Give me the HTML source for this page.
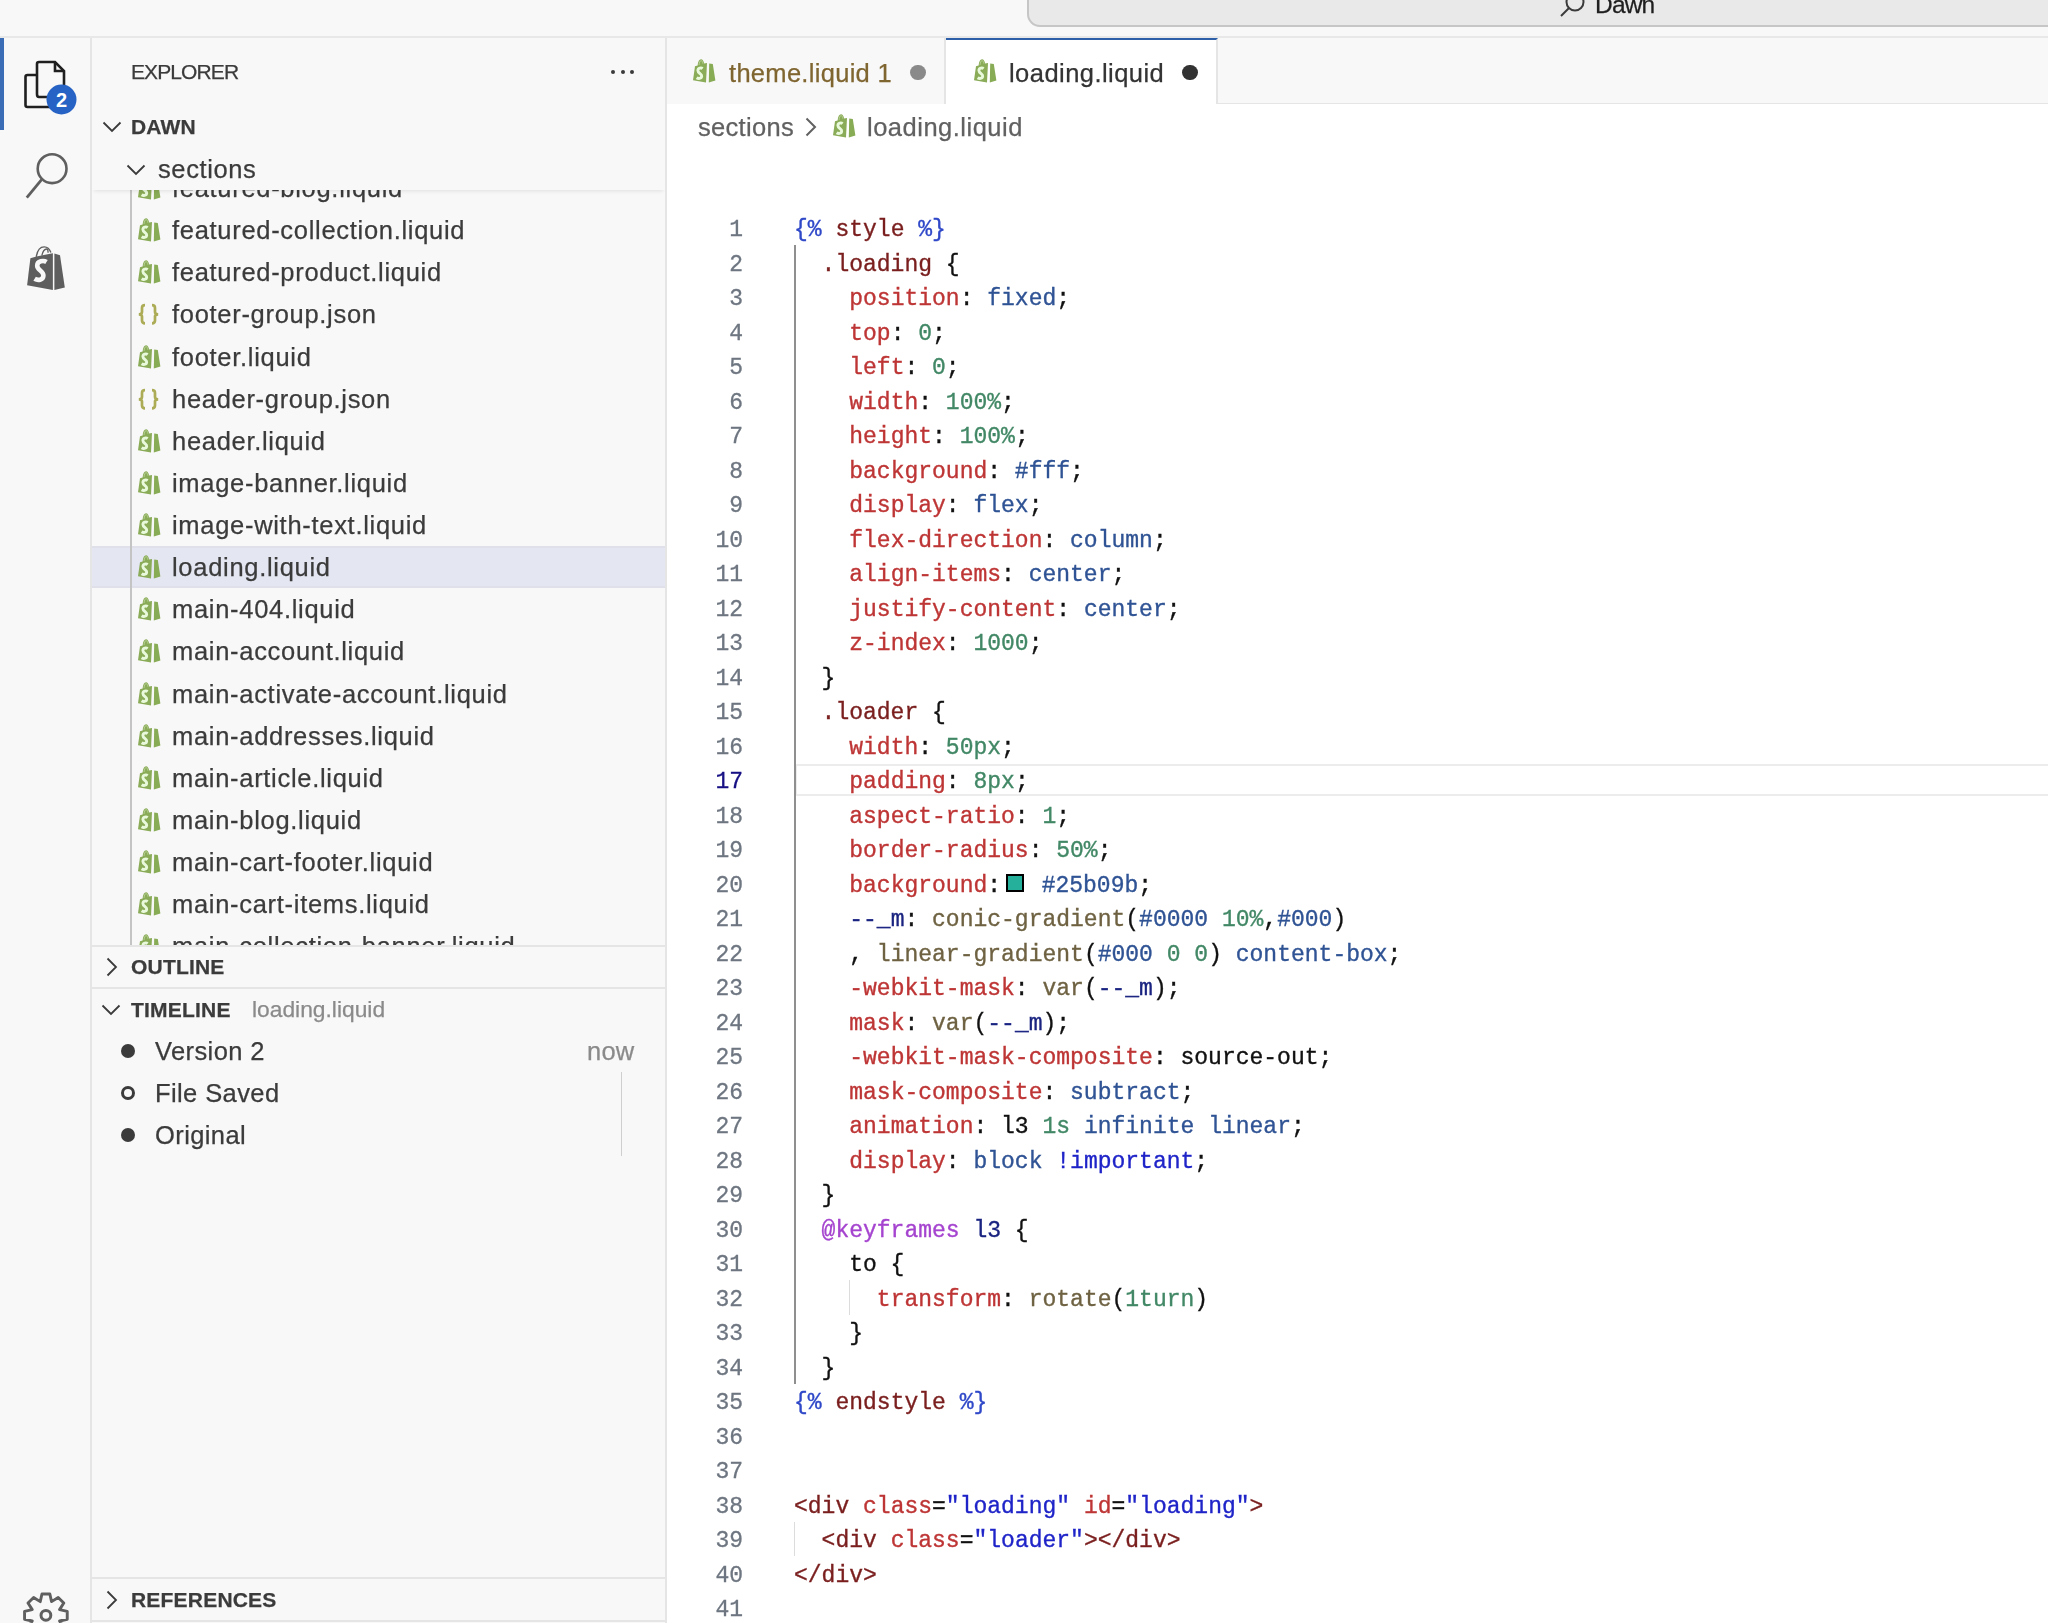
<!DOCTYPE html>
<html><head><meta charset="utf-8"><style>
*{margin:0;padding:0;box-sizing:border-box}
html,body{width:2048px;height:1623px;overflow:hidden;background:#fff;font-family:"Liberation Sans", sans-serif}
.ui,.fname,.cl,.ln{will-change:transform}
.abs{position:absolute}
.ic{position:absolute}
.jic{position:absolute;font-family:"Liberation Mono", monospace;font-size:21px;color:#a9aa5e;letter-spacing:-1px;line-height:24px}
#title{position:absolute;left:0;top:0;width:2048px;height:38px;background:#f8f8f8;border-bottom:2px solid #e8e8e8}
#cmd{position:absolute;left:1027px;top:-20px;width:1100px;height:47px;background:#e9e9e9;border:2px solid #c6c6c6;border-radius:13px}
#act{position:absolute;left:0;top:38px;width:92px;height:1585px;background:#f8f8f8;border-right:2px solid #e5e5e5}
#side{position:absolute;left:92px;top:38px;width:575px;height:1585px;background:#f8f8f8;border-right:2px solid #e5e5e5;overflow:hidden}
.ui{font-family:"Liberation Sans", sans-serif;color:#3b3b3b;white-space:nowrap;position:absolute;-webkit-text-stroke:0.25px currentColor}
.row{position:absolute;left:0;width:573px;height:42px}
.fname{-webkit-text-stroke:0.25px currentColor;position:absolute;left:80px;font-size:25.5px;letter-spacing:0.7px;line-height:42px;top:0;color:#3b3b3b}
.hdr{font-weight:bold;font-size:21px;letter-spacing:0.2px}
#tabs{position:absolute;left:667px;top:38px;width:1382px;height:67px;background:#f8f8f8;border-bottom:2px solid #e5e5e5}
.tab{position:absolute;top:0;height:67px}
#editor{position:absolute;left:667px;top:104px;width:1381px;height:1519px;background:#fff}
.ln{position:absolute;left:0;width:743px;text-align:right;font-family:"Liberation Mono", monospace;font-size:23px;color:#6e7681;height:34.5px;line-height:34.5px;-webkit-text-stroke:0.3px currentColor}
.cl{position:absolute;left:794.0px;font-family:"Liberation Mono", monospace;font-size:23px;white-space:pre;height:34.5px;line-height:34.5px;color:#000;-webkit-text-stroke:0.35px currentColor}
.ld{color:#2f48c8}
.tg{color:#7a1e1e}
.pr{color:#be3535}
.kw{color:#2f5394}
.nu{color:#428866}
.fn{color:#6e6242}
.va{color:#1a2480}
.at{color:#a544cf}
.im{color:#1f24c8}
.df{color:#111111}
</style></head>
<body>
<div id="title"><div id="cmd"></div>
<svg class="ic" style="left:1556px;top:-4px" width="30" height="24" viewBox="0 0 30 24"><circle cx="19" cy="6" r="8.5" fill="none" stroke="#3b3b3b" stroke-width="2"/><line x1="13" y1="12" x2="5" y2="20" stroke="#3b3b3b" stroke-width="2"/></svg>
<div class="ui" style="left:1595px;top:-12px;font-size:24.5px;line-height:34px;color:#1f1f1f;letter-spacing:-0.8px">Dawn</div>
</div>
<div id="act">
<div class="abs" style="left:0;top:0;width:4px;height:92px;background:#3a6db5"></div>
<svg class="ic" style="left:22px;top:21px" width="60" height="60" viewBox="0 0 60 60">
<path d="M16 16 H5.5 Q3.5 16 3.5 18 V46 Q3.5 48 5.5 48 H30" fill="none" stroke="#1f1f1f" stroke-width="2.6"/>
<path d="M17 3 H33 L42 12 V38 M17 3 Q15 3 15 5 V35 Q15 38 17 38 H26" fill="none" stroke="#1f1f1f" stroke-width="2.6"/>
<path d="M33 3 V12 H42" fill="none" stroke="#1f1f1f" stroke-width="2.6"/>
<circle cx="39.5" cy="40.5" r="15" fill="#2763c4"/>
<text x="39.5" y="48" text-anchor="middle" font-family="Liberation Sans" font-weight="bold" font-size="20" fill="#fff">2</text>
</svg>
<svg class="ic" style="left:0px;top:102px" width="90" height="70" viewBox="0 0 90 70">
<circle cx="52.1" cy="28.7" r="14.4" fill="none" stroke="#5f5f5f" stroke-width="2.6"/>
<line x1="41.6" y1="39.6" x2="26.8" y2="57.6" stroke="#5f5f5f" stroke-width="2.8"/>
</svg>
<svg class="ic" style="left:16px;top:198px" width="60" height="60" viewBox="0 0 60 60">
<path d="M14.4 22.2 L20.5 20.4 L36.9 17.2 L36.9 54 L11.1 49.2 Z" fill="#5e5e5e"/>
<path d="M38.4 17.4 L44 19.2 L48.8 51.4 L38.4 54 Z" fill="#5e5e5e"/>
<path d="M20.3 20.8 C21.3 14.5 24.3 10.9 28.2 10.9 C31.2 10.9 33.6 13 34.9 16.6" fill="none" stroke="#5e5e5e" stroke-width="1.4"/>
<path d="M25.8 19.6 C26.8 15.4 28.6 13 30.6 13 C31.6 13 32.1 14.2 32.1 16.8" fill="none" stroke="#5e5e5e" stroke-width="1.3"/>
<path d="M30.5 26 C27.8 24.3 21.2 24.6 21.2 29.8 C21.2 34.4 27.6 34.8 27.4 39.6 C27.2 44.2 21.8 44.8 18.6 42.8" fill="none" stroke="#f8f8f8" stroke-width="4.6" stroke-linecap="butt"/>
</svg>
<svg class="ic" style="left:0px;top:-38px" width="92" height="1623" viewBox="0 0 92 1623">
<path d="M41.95 1593.96 L49.85 1593.96 L51.56 1601.63 L58.19 1597.42 L63.78 1603.01 L59.57 1609.64 L67.24 1611.35 L67.24 1619.25 L59.57 1620.96 L63.78 1627.59 L58.19 1633.18 L51.56 1628.97 L49.85 1636.64 L41.95 1636.64 L40.24 1628.97 L33.61 1633.18 L28.02 1627.59 L32.23 1620.96 L24.56 1619.25 L24.56 1611.35 L32.23 1609.64 L28.02 1603.01 L33.61 1597.42 L40.24 1601.63 Z" fill="none" stroke="#5f5f5f" stroke-width="2.9" stroke-linejoin="round"/>
<circle cx="45.9" cy="1615.3" r="4.9" fill="none" stroke="#5f5f5f" stroke-width="3"/>
</svg>
</div>
<div id="side">
<div class="ui" style="left:39px;top:19px;font-size:21px;line-height:30px;letter-spacing:-0.9px">EXPLORER</div>
<div class="abs" style="left:519.0px;top:32px;width:4px;height:4px;border-radius:2px;background:#3b3b3b"></div>
<div class="abs" style="left:528.6px;top:32px;width:4px;height:4px;border-radius:2px;background:#3b3b3b"></div>
<div class="abs" style="left:538.2px;top:32px;width:4px;height:4px;border-radius:2px;background:#3b3b3b"></div>
<div class="abs" style="left:0;top:152px;width:573px;height:756px;overflow:hidden">
<div class="row" style="top:-23.00px;">
<svg class="ic" style="left:40.00px;top:4.00px" width="34" height="34" viewBox="0 0 34 34">
<path d="M8 12.2 L10.6 11.4 C11 7.5 12.3 5.3 14 5.3 C15.6 5.3 16.6 7.2 17.2 9.6 L20 9 L19 28.6 L6 26.3 Z" fill="#8aab57"/>
<path d="M22.2 9.5 L25.8 10 L28.4 26.6 L21.8 28.6 Z" fill="#88ab55"/>
<path d="M12 11 C12.3 8.2 13.1 6.6 14.1 6.6 C15 6.6 15.6 7.8 15.9 9.7" fill="none" stroke="#b9d29a" stroke-width="0.9"/>
<path d="M15.6 14.6 C14.4 13.6 10.9 13.6 10.9 16.6 C10.9 19.6 14.9 19.4 14.7 22.2 C14.5 24.9 11.2 24.8 9.6 23.7" fill="none" stroke="#e9f9dc" stroke-width="2.9" stroke-linecap="butt"/>
</svg>
<div class="fname">featured-blog.liquid</div>
</div>
<div class="row" style="top:19.12px;">
<svg class="ic" style="left:40.00px;top:4.00px" width="34" height="34" viewBox="0 0 34 34">
<path d="M8 12.2 L10.6 11.4 C11 7.5 12.3 5.3 14 5.3 C15.6 5.3 16.6 7.2 17.2 9.6 L20 9 L19 28.6 L6 26.3 Z" fill="#8aab57"/>
<path d="M22.2 9.5 L25.8 10 L28.4 26.6 L21.8 28.6 Z" fill="#88ab55"/>
<path d="M12 11 C12.3 8.2 13.1 6.6 14.1 6.6 C15 6.6 15.6 7.8 15.9 9.7" fill="none" stroke="#b9d29a" stroke-width="0.9"/>
<path d="M15.6 14.6 C14.4 13.6 10.9 13.6 10.9 16.6 C10.9 19.6 14.9 19.4 14.7 22.2 C14.5 24.9 11.2 24.8 9.6 23.7" fill="none" stroke="#e9f9dc" stroke-width="2.9" stroke-linecap="butt"/>
</svg>
<div class="fname">featured-collection.liquid</div>
</div>
<div class="row" style="top:61.25px;">
<svg class="ic" style="left:40.00px;top:4.00px" width="34" height="34" viewBox="0 0 34 34">
<path d="M8 12.2 L10.6 11.4 C11 7.5 12.3 5.3 14 5.3 C15.6 5.3 16.6 7.2 17.2 9.6 L20 9 L19 28.6 L6 26.3 Z" fill="#8aab57"/>
<path d="M22.2 9.5 L25.8 10 L28.4 26.6 L21.8 28.6 Z" fill="#88ab55"/>
<path d="M12 11 C12.3 8.2 13.1 6.6 14.1 6.6 C15 6.6 15.6 7.8 15.9 9.7" fill="none" stroke="#b9d29a" stroke-width="0.9"/>
<path d="M15.6 14.6 C14.4 13.6 10.9 13.6 10.9 16.6 C10.9 19.6 14.9 19.4 14.7 22.2 C14.5 24.9 11.2 24.8 9.6 23.7" fill="none" stroke="#e9f9dc" stroke-width="2.9" stroke-linecap="butt"/>
</svg>
<div class="fname">featured-product.liquid</div>
</div>
<div class="row" style="top:103.38px;">
<svg class="ic" style="left:45px;top:9px" width="24" height="24" viewBox="0 0 24 24">
<path d="M8 3.2 C5.6 3.2 5 4.2 5 6 V10 C5 11.4 4 12.3 1.8 12.3 C4 12.3 5 13.2 5 14.6 V18.6 C5 20.4 5.6 21.4 8 21.4" fill="none" stroke="#acac56" stroke-width="2.7"/>
<path d="M15 3.2 C17.4 3.2 18 4.2 18 6 V10 C18 11.4 19 12.3 21.2 12.3 C19 12.3 18 13.2 18 14.6 V18.6 C18 20.4 17.4 21.4 15 21.4" fill="none" stroke="#acac56" stroke-width="2.7"/>
</svg>
<div class="fname">footer-group.json</div>
</div>
<div class="row" style="top:145.50px;">
<svg class="ic" style="left:40.00px;top:4.00px" width="34" height="34" viewBox="0 0 34 34">
<path d="M8 12.2 L10.6 11.4 C11 7.5 12.3 5.3 14 5.3 C15.6 5.3 16.6 7.2 17.2 9.6 L20 9 L19 28.6 L6 26.3 Z" fill="#8aab57"/>
<path d="M22.2 9.5 L25.8 10 L28.4 26.6 L21.8 28.6 Z" fill="#88ab55"/>
<path d="M12 11 C12.3 8.2 13.1 6.6 14.1 6.6 C15 6.6 15.6 7.8 15.9 9.7" fill="none" stroke="#b9d29a" stroke-width="0.9"/>
<path d="M15.6 14.6 C14.4 13.6 10.9 13.6 10.9 16.6 C10.9 19.6 14.9 19.4 14.7 22.2 C14.5 24.9 11.2 24.8 9.6 23.7" fill="none" stroke="#e9f9dc" stroke-width="2.9" stroke-linecap="butt"/>
</svg>
<div class="fname">footer.liquid</div>
</div>
<div class="row" style="top:187.62px;">
<svg class="ic" style="left:45px;top:9px" width="24" height="24" viewBox="0 0 24 24">
<path d="M8 3.2 C5.6 3.2 5 4.2 5 6 V10 C5 11.4 4 12.3 1.8 12.3 C4 12.3 5 13.2 5 14.6 V18.6 C5 20.4 5.6 21.4 8 21.4" fill="none" stroke="#acac56" stroke-width="2.7"/>
<path d="M15 3.2 C17.4 3.2 18 4.2 18 6 V10 C18 11.4 19 12.3 21.2 12.3 C19 12.3 18 13.2 18 14.6 V18.6 C18 20.4 17.4 21.4 15 21.4" fill="none" stroke="#acac56" stroke-width="2.7"/>
</svg>
<div class="fname">header-group.json</div>
</div>
<div class="row" style="top:229.75px;">
<svg class="ic" style="left:40.00px;top:4.00px" width="34" height="34" viewBox="0 0 34 34">
<path d="M8 12.2 L10.6 11.4 C11 7.5 12.3 5.3 14 5.3 C15.6 5.3 16.6 7.2 17.2 9.6 L20 9 L19 28.6 L6 26.3 Z" fill="#8aab57"/>
<path d="M22.2 9.5 L25.8 10 L28.4 26.6 L21.8 28.6 Z" fill="#88ab55"/>
<path d="M12 11 C12.3 8.2 13.1 6.6 14.1 6.6 C15 6.6 15.6 7.8 15.9 9.7" fill="none" stroke="#b9d29a" stroke-width="0.9"/>
<path d="M15.6 14.6 C14.4 13.6 10.9 13.6 10.9 16.6 C10.9 19.6 14.9 19.4 14.7 22.2 C14.5 24.9 11.2 24.8 9.6 23.7" fill="none" stroke="#e9f9dc" stroke-width="2.9" stroke-linecap="butt"/>
</svg>
<div class="fname">header.liquid</div>
</div>
<div class="row" style="top:271.88px;">
<svg class="ic" style="left:40.00px;top:4.00px" width="34" height="34" viewBox="0 0 34 34">
<path d="M8 12.2 L10.6 11.4 C11 7.5 12.3 5.3 14 5.3 C15.6 5.3 16.6 7.2 17.2 9.6 L20 9 L19 28.6 L6 26.3 Z" fill="#8aab57"/>
<path d="M22.2 9.5 L25.8 10 L28.4 26.6 L21.8 28.6 Z" fill="#88ab55"/>
<path d="M12 11 C12.3 8.2 13.1 6.6 14.1 6.6 C15 6.6 15.6 7.8 15.9 9.7" fill="none" stroke="#b9d29a" stroke-width="0.9"/>
<path d="M15.6 14.6 C14.4 13.6 10.9 13.6 10.9 16.6 C10.9 19.6 14.9 19.4 14.7 22.2 C14.5 24.9 11.2 24.8 9.6 23.7" fill="none" stroke="#e9f9dc" stroke-width="2.9" stroke-linecap="butt"/>
</svg>
<div class="fname">image-banner.liquid</div>
</div>
<div class="row" style="top:314.00px;">
<svg class="ic" style="left:40.00px;top:4.00px" width="34" height="34" viewBox="0 0 34 34">
<path d="M8 12.2 L10.6 11.4 C11 7.5 12.3 5.3 14 5.3 C15.6 5.3 16.6 7.2 17.2 9.6 L20 9 L19 28.6 L6 26.3 Z" fill="#8aab57"/>
<path d="M22.2 9.5 L25.8 10 L28.4 26.6 L21.8 28.6 Z" fill="#88ab55"/>
<path d="M12 11 C12.3 8.2 13.1 6.6 14.1 6.6 C15 6.6 15.6 7.8 15.9 9.7" fill="none" stroke="#b9d29a" stroke-width="0.9"/>
<path d="M15.6 14.6 C14.4 13.6 10.9 13.6 10.9 16.6 C10.9 19.6 14.9 19.4 14.7 22.2 C14.5 24.9 11.2 24.8 9.6 23.7" fill="none" stroke="#e9f9dc" stroke-width="2.9" stroke-linecap="butt"/>
</svg>
<div class="fname">image-with-text.liquid</div>
</div>
<div class="row" style="top:356.12px;background:#e4e6f1;box-shadow:inset 0 2px 0 #dfe0ea, inset 0 -2px 0 #dfe0ea;">
<svg class="ic" style="left:40.00px;top:4.00px" width="34" height="34" viewBox="0 0 34 34">
<path d="M8 12.2 L10.6 11.4 C11 7.5 12.3 5.3 14 5.3 C15.6 5.3 16.6 7.2 17.2 9.6 L20 9 L19 28.6 L6 26.3 Z" fill="#8aab57"/>
<path d="M22.2 9.5 L25.8 10 L28.4 26.6 L21.8 28.6 Z" fill="#88ab55"/>
<path d="M12 11 C12.3 8.2 13.1 6.6 14.1 6.6 C15 6.6 15.6 7.8 15.9 9.7" fill="none" stroke="#b9d29a" stroke-width="0.9"/>
<path d="M15.6 14.6 C14.4 13.6 10.9 13.6 10.9 16.6 C10.9 19.6 14.9 19.4 14.7 22.2 C14.5 24.9 11.2 24.8 9.6 23.7" fill="none" stroke="#e9f9dc" stroke-width="2.9" stroke-linecap="butt"/>
</svg>
<div class="fname">loading.liquid</div>
</div>
<div class="row" style="top:398.25px;">
<svg class="ic" style="left:40.00px;top:4.00px" width="34" height="34" viewBox="0 0 34 34">
<path d="M8 12.2 L10.6 11.4 C11 7.5 12.3 5.3 14 5.3 C15.6 5.3 16.6 7.2 17.2 9.6 L20 9 L19 28.6 L6 26.3 Z" fill="#8aab57"/>
<path d="M22.2 9.5 L25.8 10 L28.4 26.6 L21.8 28.6 Z" fill="#88ab55"/>
<path d="M12 11 C12.3 8.2 13.1 6.6 14.1 6.6 C15 6.6 15.6 7.8 15.9 9.7" fill="none" stroke="#b9d29a" stroke-width="0.9"/>
<path d="M15.6 14.6 C14.4 13.6 10.9 13.6 10.9 16.6 C10.9 19.6 14.9 19.4 14.7 22.2 C14.5 24.9 11.2 24.8 9.6 23.7" fill="none" stroke="#e9f9dc" stroke-width="2.9" stroke-linecap="butt"/>
</svg>
<div class="fname">main-404.liquid</div>
</div>
<div class="row" style="top:440.38px;">
<svg class="ic" style="left:40.00px;top:4.00px" width="34" height="34" viewBox="0 0 34 34">
<path d="M8 12.2 L10.6 11.4 C11 7.5 12.3 5.3 14 5.3 C15.6 5.3 16.6 7.2 17.2 9.6 L20 9 L19 28.6 L6 26.3 Z" fill="#8aab57"/>
<path d="M22.2 9.5 L25.8 10 L28.4 26.6 L21.8 28.6 Z" fill="#88ab55"/>
<path d="M12 11 C12.3 8.2 13.1 6.6 14.1 6.6 C15 6.6 15.6 7.8 15.9 9.7" fill="none" stroke="#b9d29a" stroke-width="0.9"/>
<path d="M15.6 14.6 C14.4 13.6 10.9 13.6 10.9 16.6 C10.9 19.6 14.9 19.4 14.7 22.2 C14.5 24.9 11.2 24.8 9.6 23.7" fill="none" stroke="#e9f9dc" stroke-width="2.9" stroke-linecap="butt"/>
</svg>
<div class="fname">main-account.liquid</div>
</div>
<div class="row" style="top:482.50px;">
<svg class="ic" style="left:40.00px;top:4.00px" width="34" height="34" viewBox="0 0 34 34">
<path d="M8 12.2 L10.6 11.4 C11 7.5 12.3 5.3 14 5.3 C15.6 5.3 16.6 7.2 17.2 9.6 L20 9 L19 28.6 L6 26.3 Z" fill="#8aab57"/>
<path d="M22.2 9.5 L25.8 10 L28.4 26.6 L21.8 28.6 Z" fill="#88ab55"/>
<path d="M12 11 C12.3 8.2 13.1 6.6 14.1 6.6 C15 6.6 15.6 7.8 15.9 9.7" fill="none" stroke="#b9d29a" stroke-width="0.9"/>
<path d="M15.6 14.6 C14.4 13.6 10.9 13.6 10.9 16.6 C10.9 19.6 14.9 19.4 14.7 22.2 C14.5 24.9 11.2 24.8 9.6 23.7" fill="none" stroke="#e9f9dc" stroke-width="2.9" stroke-linecap="butt"/>
</svg>
<div class="fname">main-activate-account.liquid</div>
</div>
<div class="row" style="top:524.62px;">
<svg class="ic" style="left:40.00px;top:4.00px" width="34" height="34" viewBox="0 0 34 34">
<path d="M8 12.2 L10.6 11.4 C11 7.5 12.3 5.3 14 5.3 C15.6 5.3 16.6 7.2 17.2 9.6 L20 9 L19 28.6 L6 26.3 Z" fill="#8aab57"/>
<path d="M22.2 9.5 L25.8 10 L28.4 26.6 L21.8 28.6 Z" fill="#88ab55"/>
<path d="M12 11 C12.3 8.2 13.1 6.6 14.1 6.6 C15 6.6 15.6 7.8 15.9 9.7" fill="none" stroke="#b9d29a" stroke-width="0.9"/>
<path d="M15.6 14.6 C14.4 13.6 10.9 13.6 10.9 16.6 C10.9 19.6 14.9 19.4 14.7 22.2 C14.5 24.9 11.2 24.8 9.6 23.7" fill="none" stroke="#e9f9dc" stroke-width="2.9" stroke-linecap="butt"/>
</svg>
<div class="fname">main-addresses.liquid</div>
</div>
<div class="row" style="top:566.75px;">
<svg class="ic" style="left:40.00px;top:4.00px" width="34" height="34" viewBox="0 0 34 34">
<path d="M8 12.2 L10.6 11.4 C11 7.5 12.3 5.3 14 5.3 C15.6 5.3 16.6 7.2 17.2 9.6 L20 9 L19 28.6 L6 26.3 Z" fill="#8aab57"/>
<path d="M22.2 9.5 L25.8 10 L28.4 26.6 L21.8 28.6 Z" fill="#88ab55"/>
<path d="M12 11 C12.3 8.2 13.1 6.6 14.1 6.6 C15 6.6 15.6 7.8 15.9 9.7" fill="none" stroke="#b9d29a" stroke-width="0.9"/>
<path d="M15.6 14.6 C14.4 13.6 10.9 13.6 10.9 16.6 C10.9 19.6 14.9 19.4 14.7 22.2 C14.5 24.9 11.2 24.8 9.6 23.7" fill="none" stroke="#e9f9dc" stroke-width="2.9" stroke-linecap="butt"/>
</svg>
<div class="fname">main-article.liquid</div>
</div>
<div class="row" style="top:608.88px;">
<svg class="ic" style="left:40.00px;top:4.00px" width="34" height="34" viewBox="0 0 34 34">
<path d="M8 12.2 L10.6 11.4 C11 7.5 12.3 5.3 14 5.3 C15.6 5.3 16.6 7.2 17.2 9.6 L20 9 L19 28.6 L6 26.3 Z" fill="#8aab57"/>
<path d="M22.2 9.5 L25.8 10 L28.4 26.6 L21.8 28.6 Z" fill="#88ab55"/>
<path d="M12 11 C12.3 8.2 13.1 6.6 14.1 6.6 C15 6.6 15.6 7.8 15.9 9.7" fill="none" stroke="#b9d29a" stroke-width="0.9"/>
<path d="M15.6 14.6 C14.4 13.6 10.9 13.6 10.9 16.6 C10.9 19.6 14.9 19.4 14.7 22.2 C14.5 24.9 11.2 24.8 9.6 23.7" fill="none" stroke="#e9f9dc" stroke-width="2.9" stroke-linecap="butt"/>
</svg>
<div class="fname">main-blog.liquid</div>
</div>
<div class="row" style="top:651.00px;">
<svg class="ic" style="left:40.00px;top:4.00px" width="34" height="34" viewBox="0 0 34 34">
<path d="M8 12.2 L10.6 11.4 C11 7.5 12.3 5.3 14 5.3 C15.6 5.3 16.6 7.2 17.2 9.6 L20 9 L19 28.6 L6 26.3 Z" fill="#8aab57"/>
<path d="M22.2 9.5 L25.8 10 L28.4 26.6 L21.8 28.6 Z" fill="#88ab55"/>
<path d="M12 11 C12.3 8.2 13.1 6.6 14.1 6.6 C15 6.6 15.6 7.8 15.9 9.7" fill="none" stroke="#b9d29a" stroke-width="0.9"/>
<path d="M15.6 14.6 C14.4 13.6 10.9 13.6 10.9 16.6 C10.9 19.6 14.9 19.4 14.7 22.2 C14.5 24.9 11.2 24.8 9.6 23.7" fill="none" stroke="#e9f9dc" stroke-width="2.9" stroke-linecap="butt"/>
</svg>
<div class="fname">main-cart-footer.liquid</div>
</div>
<div class="row" style="top:693.12px;">
<svg class="ic" style="left:40.00px;top:4.00px" width="34" height="34" viewBox="0 0 34 34">
<path d="M8 12.2 L10.6 11.4 C11 7.5 12.3 5.3 14 5.3 C15.6 5.3 16.6 7.2 17.2 9.6 L20 9 L19 28.6 L6 26.3 Z" fill="#8aab57"/>
<path d="M22.2 9.5 L25.8 10 L28.4 26.6 L21.8 28.6 Z" fill="#88ab55"/>
<path d="M12 11 C12.3 8.2 13.1 6.6 14.1 6.6 C15 6.6 15.6 7.8 15.9 9.7" fill="none" stroke="#b9d29a" stroke-width="0.9"/>
<path d="M15.6 14.6 C14.4 13.6 10.9 13.6 10.9 16.6 C10.9 19.6 14.9 19.4 14.7 22.2 C14.5 24.9 11.2 24.8 9.6 23.7" fill="none" stroke="#e9f9dc" stroke-width="2.9" stroke-linecap="butt"/>
</svg>
<div class="fname">main-cart-items.liquid</div>
</div>
<div class="row" style="top:735.25px;">
<svg class="ic" style="left:40.00px;top:4.00px" width="34" height="34" viewBox="0 0 34 34">
<path d="M8 12.2 L10.6 11.4 C11 7.5 12.3 5.3 14 5.3 C15.6 5.3 16.6 7.2 17.2 9.6 L20 9 L19 28.6 L6 26.3 Z" fill="#8aab57"/>
<path d="M22.2 9.5 L25.8 10 L28.4 26.6 L21.8 28.6 Z" fill="#88ab55"/>
<path d="M12 11 C12.3 8.2 13.1 6.6 14.1 6.6 C15 6.6 15.6 7.8 15.9 9.7" fill="none" stroke="#b9d29a" stroke-width="0.9"/>
<path d="M15.6 14.6 C14.4 13.6 10.9 13.6 10.9 16.6 C10.9 19.6 14.9 19.4 14.7 22.2 C14.5 24.9 11.2 24.8 9.6 23.7" fill="none" stroke="#e9f9dc" stroke-width="2.9" stroke-linecap="butt"/>
</svg>
<div class="fname">main-collection-banner.liquid</div>
</div>
<div class="abs" style="left:38px;top:0;width:2px;height:760px;background:#c4c4c4"></div>
</div>
<div class="abs" style="left:0;top:66px;width:573px;height:86px;background:#f8f8f8;box-shadow:0 3px 4px -2px rgba(0,0,0,0.10)"></div>
<svg class="ic" style="left:9.5px;top:83px" width="20" height="12" viewBox="0 0 20 12"><path d="M1.5 1.5 L10 10 L18.5 1.5" fill="none" stroke="#3b3b3b" stroke-width="1.8"/></svg>
<div class="ui hdr" style="left:39px;top:73px;line-height:32px">DAWN</div>
<svg class="ic" style="left:34px;top:125.5px" width="20" height="12" viewBox="0 0 20 12"><path d="M1.5 1.5 L10 10 L18.5 1.5" fill="none" stroke="#3b3b3b" stroke-width="1.8"/></svg>
<div class="ui" style="left:66px;top:110px;font-size:25.5px;letter-spacing:0.6px;line-height:42px">sections</div>
<div class="abs" style="left:0;top:907px;width:573px;height:2px;background:#e5e5e5"></div>
<svg class="ic" style="left:14px;top:919px" width="12" height="20" viewBox="0 0 12 20"><path d="M1.5 1.5 L10 10 L1.5 18.5" fill="none" stroke="#3b3b3b" stroke-width="1.8"/></svg>
<div class="ui hdr" style="left:39px;top:913px;line-height:32px">OUTLINE</div>
<div class="abs" style="left:0;top:949px;width:573px;height:2px;background:#e5e5e5"></div>
<svg class="ic" style="left:9px;top:966px" width="20" height="12" viewBox="0 0 20 12"><path d="M1.5 1.5 L10 10 L18.5 1.5" fill="none" stroke="#3b3b3b" stroke-width="1.8"/></svg>
<div class="ui hdr" style="left:39px;top:956px;line-height:32px">TIMELINE</div>
<div class="ui" style="left:160px;top:955px;line-height:32px;font-size:22.8px;color:#8a8a8a">loading.liquid</div>
<div class="abs" style="left:29px;top:1006px;width:14px;height:14px;border-radius:7px;background:#3b3b3b"></div>
<div class="ui" style="left:63px;top:992px;font-size:25.5px;letter-spacing:0.4px;line-height:42px">Version 2</div>
<div class="abs" style="left:29px;top:1048px;width:14px;height:14px;border-radius:7px;border:3px solid #3b3b3b"></div>
<div class="ui" style="left:63px;top:1034px;font-size:25.5px;letter-spacing:0.4px;line-height:42px">File Saved</div>
<div class="abs" style="left:29px;top:1090px;width:14px;height:14px;border-radius:7px;background:#3b3b3b"></div>
<div class="ui" style="left:63px;top:1076px;font-size:25.5px;letter-spacing:0.4px;line-height:42px">Original</div>
<div class="ui" style="left:495px;top:992px;font-size:25.5px;letter-spacing:0.2px;line-height:42px;color:#8a8a8a">now</div>
<div class="abs" style="left:529px;top:1034px;width:1px;height:84px;background:#cfcfcf"></div>
<div class="abs" style="left:0;top:1539px;width:573px;height:2px;background:#e5e5e5"></div>
<svg class="ic" style="left:14px;top:1552px" width="12" height="20" viewBox="0 0 12 20"><path d="M1.5 1.5 L10 10 L1.5 18.5" fill="none" stroke="#3b3b3b" stroke-width="1.8"/></svg>
<div class="ui hdr" style="left:39px;top:1546px;line-height:32px">REFERENCES</div>
<div class="abs" style="left:0;top:1582px;width:573px;height:2px;background:#e5e5e5"></div>
</div>
<div id="tabs">
<div class="tab" style="left:0;width:279px;background:#f8f8f8;border-right:2px solid #e5e5e5"></div>
<svg class="ic" style="left:20.00px;top:16.30px" width="34" height="34" viewBox="0 0 34 34">
<path d="M8 12.2 L10.6 11.4 C11 7.5 12.3 5.3 14 5.3 C15.6 5.3 16.6 7.2 17.2 9.6 L20 9 L19 28.6 L6 26.3 Z" fill="#8aab57"/>
<path d="M22.2 9.5 L25.8 10 L28.4 26.6 L21.8 28.6 Z" fill="#88ab55"/>
<path d="M12 11 C12.3 8.2 13.1 6.6 14.1 6.6 C15 6.6 15.6 7.8 15.9 9.7" fill="none" stroke="#b9d29a" stroke-width="0.9"/>
<path d="M15.6 14.6 C14.4 13.6 10.9 13.6 10.9 16.6 C10.9 19.6 14.9 19.4 14.7 22.2 C14.5 24.9 11.2 24.8 9.6 23.7" fill="none" stroke="#e9f9dc" stroke-width="2.9" stroke-linecap="butt"/>
</svg>
<div class="ui" style="left:62px;top:14px;font-size:25.5px;letter-spacing:0.3px;line-height:42px;color:#7f6530">theme.liquid 1</div>
<div class="abs" style="left:243px;top:26.5px;width:15.5px;height:15.5px;border-radius:8px;background:#8a8a8a"></div>
<div class="tab" style="left:279px;width:272px;height:69px;background:#ffffff;border-right:2px solid #e5e5e5;border-top:2px solid #2d5ea8"></div>
<svg class="ic" style="left:301.00px;top:16.30px" width="34" height="34" viewBox="0 0 34 34">
<path d="M8 12.2 L10.6 11.4 C11 7.5 12.3 5.3 14 5.3 C15.6 5.3 16.6 7.2 17.2 9.6 L20 9 L19 28.6 L6 26.3 Z" fill="#8aab57"/>
<path d="M22.2 9.5 L25.8 10 L28.4 26.6 L21.8 28.6 Z" fill="#88ab55"/>
<path d="M12 11 C12.3 8.2 13.1 6.6 14.1 6.6 C15 6.6 15.6 7.8 15.9 9.7" fill="none" stroke="#b9d29a" stroke-width="0.9"/>
<path d="M15.6 14.6 C14.4 13.6 10.9 13.6 10.9 16.6 C10.9 19.6 14.9 19.4 14.7 22.2 C14.5 24.9 11.2 24.8 9.6 23.7" fill="none" stroke="#e9f9dc" stroke-width="2.9" stroke-linecap="butt"/>
</svg>
<div class="ui" style="left:342px;top:14px;font-size:25.5px;letter-spacing:0.45px;line-height:42px;color:#333333">loading.liquid</div>
<div class="abs" style="left:515px;top:26.5px;width:15.5px;height:15.5px;border-radius:8px;background:#333333"></div>
</div>
<div id="editor">
<div class="ui" style="left:31px;top:2px;font-size:25.5px;letter-spacing:0.3px;line-height:42px;color:#616161">sections</div>
<svg class="ic" style="left:138px;top:13px" width="12" height="20" viewBox="0 0 12 20"><path d="M1.5 1.5 L10 10 L1.5 18.5" fill="none" stroke="#616161" stroke-width="2"/></svg>
<svg class="ic" style="left:160.00px;top:5.30px" width="34" height="34" viewBox="0 0 34 34">
<path d="M8 12.2 L10.6 11.4 C11 7.5 12.3 5.3 14 5.3 C15.6 5.3 16.6 7.2 17.2 9.6 L20 9 L19 28.6 L6 26.3 Z" fill="#8aab57"/>
<path d="M22.2 9.5 L25.8 10 L28.4 26.6 L21.8 28.6 Z" fill="#88ab55"/>
<path d="M12 11 C12.3 8.2 13.1 6.6 14.1 6.6 C15 6.6 15.6 7.8 15.9 9.7" fill="none" stroke="#b9d29a" stroke-width="0.9"/>
<path d="M15.6 14.6 C14.4 13.6 10.9 13.6 10.9 16.6 C10.9 19.6 14.9 19.4 14.7 22.2 C14.5 24.9 11.2 24.8 9.6 23.7" fill="none" stroke="#e9f9dc" stroke-width="2.9" stroke-linecap="butt"/>
</svg>
<div class="ui" style="left:199.5px;top:2px;font-size:25.5px;letter-spacing:0.5px;line-height:42px;color:#616161">loading.liquid</div>
</div>
<div class="abs" style="left:795px;top:764px;width:1260px;height:32px;border:2px solid #ececec"></div>
<div class="abs" style="left:793.50px;top:245.00px;width:2px;height:1138.50px;background:#8f8f8f"></div>
<div class="abs" style="left:848.70px;top:1280.00px;width:1px;height:34.50px;background:#dcdcdc"></div>
<div class="abs" style="left:793.50px;top:1521.50px;width:1px;height:34.50px;background:#dcdcdc"></div>
<div class="ln" style="top:213.00px;color:#6e7681">1</div>
<div class="cl" style="top:213.00px"><span class="ld">{%</span><span class="df"> </span><span class="tg">style</span><span class="df"> </span><span class="ld">%}</span></div>
<div class="ln" style="top:247.50px;color:#6e7681">2</div>
<div class="cl" style="top:247.50px"><span class="df">  </span><span class="tg">.loading</span><span class="df"> {</span></div>
<div class="ln" style="top:282.00px;color:#6e7681">3</div>
<div class="cl" style="top:282.00px"><span class="df">    </span><span class="pr">position</span><span class="df">: </span><span class="kw">fixed</span><span class="df">;</span></div>
<div class="ln" style="top:316.50px;color:#6e7681">4</div>
<div class="cl" style="top:316.50px"><span class="df">    </span><span class="pr">top</span><span class="df">: </span><span class="nu">0</span><span class="df">;</span></div>
<div class="ln" style="top:351.00px;color:#6e7681">5</div>
<div class="cl" style="top:351.00px"><span class="df">    </span><span class="pr">left</span><span class="df">: </span><span class="nu">0</span><span class="df">;</span></div>
<div class="ln" style="top:385.50px;color:#6e7681">6</div>
<div class="cl" style="top:385.50px"><span class="df">    </span><span class="pr">width</span><span class="df">: </span><span class="nu">100%</span><span class="df">;</span></div>
<div class="ln" style="top:420.00px;color:#6e7681">7</div>
<div class="cl" style="top:420.00px"><span class="df">    </span><span class="pr">height</span><span class="df">: </span><span class="nu">100%</span><span class="df">;</span></div>
<div class="ln" style="top:454.50px;color:#6e7681">8</div>
<div class="cl" style="top:454.50px"><span class="df">    </span><span class="pr">background</span><span class="df">: </span><span class="kw">#fff</span><span class="df">;</span></div>
<div class="ln" style="top:489.00px;color:#6e7681">9</div>
<div class="cl" style="top:489.00px"><span class="df">    </span><span class="pr">display</span><span class="df">: </span><span class="kw">flex</span><span class="df">;</span></div>
<div class="ln" style="top:523.50px;color:#6e7681">10</div>
<div class="cl" style="top:523.50px"><span class="df">    </span><span class="pr">flex-direction</span><span class="df">: </span><span class="kw">column</span><span class="df">;</span></div>
<div class="ln" style="top:558.00px;color:#6e7681">11</div>
<div class="cl" style="top:558.00px"><span class="df">    </span><span class="pr">align-items</span><span class="df">: </span><span class="kw">center</span><span class="df">;</span></div>
<div class="ln" style="top:592.50px;color:#6e7681">12</div>
<div class="cl" style="top:592.50px"><span class="df">    </span><span class="pr">justify-content</span><span class="df">: </span><span class="kw">center</span><span class="df">;</span></div>
<div class="ln" style="top:627.00px;color:#6e7681">13</div>
<div class="cl" style="top:627.00px"><span class="df">    </span><span class="pr">z-index</span><span class="df">: </span><span class="nu">1000</span><span class="df">;</span></div>
<div class="ln" style="top:661.50px;color:#6e7681">14</div>
<div class="cl" style="top:661.50px"><span class="df">  }</span></div>
<div class="ln" style="top:696.00px;color:#6e7681">15</div>
<div class="cl" style="top:696.00px"><span class="df">  </span><span class="tg">.loader</span><span class="df"> {</span></div>
<div class="ln" style="top:730.50px;color:#6e7681">16</div>
<div class="cl" style="top:730.50px"><span class="df">    </span><span class="pr">width</span><span class="df">: </span><span class="nu">50px</span><span class="df">;</span></div>
<div class="ln" style="top:765.00px;color:#171184">17</div>
<div class="cl" style="top:765.00px"><span class="df">    </span><span class="pr">padding</span><span class="df">: </span><span class="nu">8px</span><span class="df">;</span></div>
<div class="ln" style="top:799.50px;color:#6e7681">18</div>
<div class="cl" style="top:799.50px"><span class="df">    </span><span class="pr">aspect-ratio</span><span class="df">: </span><span class="nu">1</span><span class="df">;</span></div>
<div class="ln" style="top:834.00px;color:#6e7681">19</div>
<div class="cl" style="top:834.00px"><span class="df">    </span><span class="pr">border-radius</span><span class="df">: </span><span class="nu">50%</span><span class="df">;</span></div>
<div class="ln" style="top:868.50px;color:#6e7681">20</div>
<div class="cl" style="top:868.50px"><span class="df">    </span><span class="pr">background</span><span class="df">:</span><span style="display:inline-block;width:26.75px;height:10px;position:relative"><span style="position:absolute;left:5px;top:-8px;width:18px;height:18px;border:2px solid #000;background:#25b09b"></span></span><span class="df"> </span><span class="kw">#25b09b</span><span class="df">;</span></div>
<div class="ln" style="top:903.00px;color:#6e7681">21</div>
<div class="cl" style="top:903.00px"><span class="df">    </span><span class="va">--_m</span><span class="df">: </span><span class="fn">conic-gradient</span><span class="df">(</span><span class="kw">#0000</span><span class="df"> </span><span class="nu">10%</span><span class="df">,</span><span class="kw">#000</span><span class="df">)</span></div>
<div class="ln" style="top:937.50px;color:#6e7681">22</div>
<div class="cl" style="top:937.50px"><span class="df">    , </span><span class="fn">linear-gradient</span><span class="df">(</span><span class="kw">#000</span><span class="df"> </span><span class="nu">0</span><span class="df"> </span><span class="nu">0</span><span class="df">) </span><span class="kw">content-box</span><span class="df">;</span></div>
<div class="ln" style="top:972.00px;color:#6e7681">23</div>
<div class="cl" style="top:972.00px"><span class="df">    </span><span class="pr">-webkit-mask</span><span class="df">: </span><span class="fn">var</span><span class="df">(</span><span class="va">--_m</span><span class="df">);</span></div>
<div class="ln" style="top:1006.50px;color:#6e7681">24</div>
<div class="cl" style="top:1006.50px"><span class="df">    </span><span class="pr">mask</span><span class="df">: </span><span class="fn">var</span><span class="df">(</span><span class="va">--_m</span><span class="df">);</span></div>
<div class="ln" style="top:1041.00px;color:#6e7681">25</div>
<div class="cl" style="top:1041.00px"><span class="df">    </span><span class="pr">-webkit-mask-composite</span><span class="df">: source-out;</span></div>
<div class="ln" style="top:1075.50px;color:#6e7681">26</div>
<div class="cl" style="top:1075.50px"><span class="df">    </span><span class="pr">mask-composite</span><span class="df">: </span><span class="kw">subtract</span><span class="df">;</span></div>
<div class="ln" style="top:1110.00px;color:#6e7681">27</div>
<div class="cl" style="top:1110.00px"><span class="df">    </span><span class="pr">animation</span><span class="df">: l3 </span><span class="nu">1s</span><span class="df"> </span><span class="kw">infinite</span><span class="df"> </span><span class="kw">linear</span><span class="df">;</span></div>
<div class="ln" style="top:1144.50px;color:#6e7681">28</div>
<div class="cl" style="top:1144.50px"><span class="df">    </span><span class="pr">display</span><span class="df">: </span><span class="kw">block</span><span class="df"> </span><span class="im">!important</span><span class="df">;</span></div>
<div class="ln" style="top:1179.00px;color:#6e7681">29</div>
<div class="cl" style="top:1179.00px"><span class="df">  }</span></div>
<div class="ln" style="top:1213.50px;color:#6e7681">30</div>
<div class="cl" style="top:1213.50px"><span class="df">  </span><span class="at">@keyframes</span><span class="df"> </span><span class="va">l3</span><span class="df"> {</span></div>
<div class="ln" style="top:1248.00px;color:#6e7681">31</div>
<div class="cl" style="top:1248.00px"><span class="df">    to {</span></div>
<div class="ln" style="top:1282.50px;color:#6e7681">32</div>
<div class="cl" style="top:1282.50px"><span class="df">      </span><span class="pr">transform</span><span class="df">: </span><span class="fn">rotate</span><span class="df">(</span><span class="nu">1turn</span><span class="df">)</span></div>
<div class="ln" style="top:1317.00px;color:#6e7681">33</div>
<div class="cl" style="top:1317.00px"><span class="df">    }</span></div>
<div class="ln" style="top:1351.50px;color:#6e7681">34</div>
<div class="cl" style="top:1351.50px"><span class="df">  }</span></div>
<div class="ln" style="top:1386.00px;color:#6e7681">35</div>
<div class="cl" style="top:1386.00px"><span class="ld">{%</span><span class="df"> </span><span class="tg">endstyle</span><span class="df"> </span><span class="ld">%}</span></div>
<div class="ln" style="top:1420.50px;color:#6e7681">36</div>
<div class="cl" style="top:1420.50px"></div>
<div class="ln" style="top:1455.00px;color:#6e7681">37</div>
<div class="cl" style="top:1455.00px"></div>
<div class="ln" style="top:1489.50px;color:#6e7681">38</div>
<div class="cl" style="top:1489.50px"><span class="tg">&lt;div</span><span class="df"> </span><span class="pr">class</span><span class="df">=</span><span class="im">&quot;loading&quot;</span><span class="df"> </span><span class="pr">id</span><span class="df">=</span><span class="im">&quot;loading&quot;</span><span class="tg">&gt;</span></div>
<div class="ln" style="top:1524.00px;color:#6e7681">39</div>
<div class="cl" style="top:1524.00px"><span class="df">  </span><span class="tg">&lt;div</span><span class="df"> </span><span class="pr">class</span><span class="df">=</span><span class="im">&quot;loader&quot;</span><span class="tg">&gt;&lt;/div&gt;</span></div>
<div class="ln" style="top:1558.50px;color:#6e7681">40</div>
<div class="cl" style="top:1558.50px"><span class="tg">&lt;/div&gt;</span></div>
<div class="ln" style="top:1593.00px;color:#6e7681">41</div>
<div class="cl" style="top:1593.00px"></div>
</body></html>
